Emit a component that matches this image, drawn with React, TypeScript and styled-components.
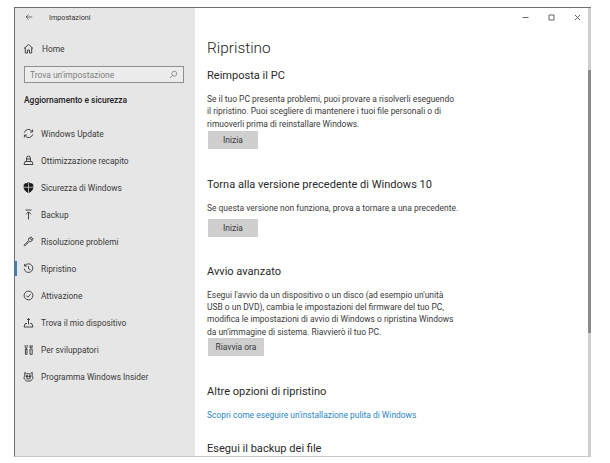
import React from "react";
import styled, { createGlobalStyle } from "styled-components";

const Global = createGlobalStyle`
  html, body { margin: 0; padding: 0; background: #fff; }
  body { width: 610px; height: 463px; overflow: hidden; font-family: Roboto, "Open Sans", sans-serif; color: #222; }
  * { box-sizing: border-box; }
`;

const Page = styled.div`
  width: 610px;
  height: 463px;
  padding: 7px 19px 6px 14px;
`;
const Win = styled.div`
  display: flex;
  width: 577px;
  height: 450px;
  border-top: 1px solid #6f6f6f;
  border-left: 1px solid #6f6f6f;
  border-bottom: 1px solid #c8c8c8;
`;
const Sidebar = styled.aside`
  width: 180px;
  flex: none;
  background: #e6e6e6;
  display: flex;
  flex-direction: column;
`;
const TitleRow = styled.div`
  height: 18px;
  display: flex;
  align-items: center;
  padding-left: 10px;
  gap: 16px;
  font-size: 7.2px;
  color: #333;
`;
const HomeRow = styled.div`
  height: 27px;
  margin-top: 9px;
  display: flex;
  align-items: center;
  gap: 8px;
  padding-left: 8px;
  font-size: 8.4px;
  color: #3a3a3a;
`;
const Search = styled.div`
  margin: 4px 0 0 9px;
  width: 160px;
  height: 17px;
  border: 1px solid #8f8f8f;
  background: #ececec;
  display: flex;
  align-items: center;
  justify-content: space-between;
  padding: 0 5px 0 5px;
  font-size: 8.45px;
  color: #808080;
`;
const SectionTitle = styled.div`
  margin: 10px 0 0 9px;
  height: 14px;
  line-height: 14px;
  font-size: 8.45px;
  font-weight: 500;
  color: #222;
`;
const Nav = styled.nav`
  margin-top: 13px;
  display: flex;
  flex-direction: column;
`;
const NavItem = styled.div<{ $active?: boolean }>`
  position: relative;
  height: 27px;
  display: flex;
  align-items: center;
  gap: 7px;
  padding-left: 8px;
  font-size: 8.35px;
  color: #3a3a3a;
  &::before {
    content: "";
    display: ${(p) => (p.$active ? "block" : "none")};
    position: absolute;
    left: 0;
    top: 6px;
    width: 2px;
    height: 15px;
    background: #3c7fc0;
  }
`;
const Main = styled.main`
  flex: 1;
  position: relative;
  background: #fff;
  padding: 31px 0 0 12px;
  overflow: hidden;
`;
const Controls = styled.div`
  position: absolute;
  top: 4px;
  right: 0;
  display: flex;
  align-items: center;
  gap: 19px;
  padding-right: 7px;
  height: 10px;
`;
const H1 = styled.h1`
  margin: 0;
  font-weight: 300;
  font-size: 15.4px;
  line-height: 18px;
  color: #222;
`;
const H2 = styled.h2<{ $mt: number }>`
  margin: ${(p) => p.$mt}px 0 0;
  font-weight: 400;
  font-size: 11.05px;
  line-height: 16px;
  color: #2a2a2a;
`;
const P = styled.p`
  margin: 9px 0 0;
  font-size: 8.45px;
  line-height: 12.4px;
  color: #3a3a3a;
`;
const Btn = styled.div<{ $w: number; $mt: number }>`
  margin-top: ${(p) => p.$mt}px;
  margin-left: 1px;
  width: ${(p) => p.$w}px;
  height: 18px;
  background: #cfcfcf;
  display: flex;
  align-items: center;
  justify-content: center;
  font-size: 8.45px;
  color: #3a3a3a;
`;
const LinkText = styled.a`
  display: block;
  margin-top: 9px;
  font-size: 8.45px;
  line-height: 12px;
  color: #2a86c2;
`;
const Track = styled.div`
  width: 3px;
  flex: none;
  background: #cfcfcf;
`;
const Thumb = styled.div`
  margin-top: 62px;
  height: 263px;
  background: #8a8a8a;
`;

const Ic = styled.svg<{ $size?: number; $stroke?: string }>`
  width: ${(p) => p.$size ?? 11}px;
  height: ${(p) => p.$size ?? 11}px;
  flex: none;
  fill: none;
  stroke: ${(p) => p.$stroke ?? "#333"};
  stroke-width: 0.9;
`;

const icons: Record<string, React.ReactNode> = {
  update: <><path d="M1.3 4.6a4.2 4.2 0 0 1 7.4-1.6l.8.9" /><path d="M9.6 1.6V4H7.2" /><path d="M9.7 6.4a4.2 4.2 0 0 1-7.4 1.6l-.8-.9" /><path d="M1.4 9.4V7h2.4" /></>,
  delivery: <><path d="M3.6 6V3a1.9 1.9 0 0 1 3.8 0v3" /><path d="M3.6 4h3.8" /><path d="M2 6.5h7l1 3H1z" /></>,
  shield: <><path d="M5.5.8 9.8 2.3V6c0 2.2-2.2 3.7-4.3 4.7C3.4 9.7 1.2 8.2 1.2 6V2.3z" fill="#1c1c1c" stroke="#1c1c1c" /><path d="M5.5.8v10M1.2 5.3h8.6" stroke="#e6e6e6" strokeWidth=".7" /></>,
  backup: <><path d="M2.5 1h6" /><path d="M5.5 10.5V3" /><path d="M3 5.3l2.5-2.5L8 5.3" /></>,
  wrench: <path d="M1.2 9 5.6 4.6a2.6 2.6 0 0 1 3.2-3.3L7.3 2.8l.9.9 1.5-1.5a2.6 2.6 0 0 1-3.3 3.2L2 9.8a.6.6 0 0 1-.8-.8z" />,
  restore: <><path d="M2 2.6a4.3 4.3 0 1 1-.8 3" /><path d="M1.6 .9v2.2h2.2" /><path d="M5.5 3v2.8l2 1" /></>,
  check: <><circle cx="5.5" cy="5.5" r="4.4" /><path d="M3.4 5.6l1.5 1.5 2.7-2.9" /></>,
  find: <><path d="M1 10h9L8.8 6.6H7" /><path d="M4 6.6H2.2L1 10" /><path d="M5.5 7.5V1.5" /><path d="M4 3l1.5-1.5L7 3" /></>,
  dev: <><path d="M2.2 1v1.8c0 .8.5 1.4 1 1.4s1-.6 1-1.4V1" /><path d="M3.2 4.2v1" /><path d="M7 5h2.2v5.3H7z" /><path d="M7.2 3.2V1M9 3.2V1M6.6 3.4h3" /><path d="M2.4 5h1.6v5.3H2.4z" /></>,
  insider: <><path d="M1.8 1.3 3.5 2.8h4l1.7-1.5V5c1 .6 1 3 0 3.5L7.6 10H3.4L1.8 8.5C.8 8 .8 5.6 1.8 5z" /><circle cx="4" cy="5.4" r=".9" fill="#333" /><circle cx="7" cy="5.4" r=".9" fill="#333" /><path d="M3.4 7.8h4.2" /></>,
};

const items: [string, string][] = [
  ["update", "Windows Update"],
  ["delivery", "Ottimizzazione recapito"],
  ["shield", "Sicurezza di Windows"],
  ["backup", "Backup"],
  ["wrench", "Risoluzione problemi"],
  ["restore", "Ripristino"],
  ["check", "Attivazione"],
  ["find", "Trova il mio dispositivo"],
  ["dev", "Per sviluppatori"],
  ["insider", "Programma Windows Insider"],
];

export default function App() {
  return (
    <Page>
      <Global />
      <Win>
        <Sidebar>
          <TitleRow>
            <Ic viewBox="0 0 11 11" $size={8}><path d="M10 5.5H1.5M5 2 1.5 5.5 5 9" /></Ic>
            <span>Impostazioni</span>
          </TitleRow>
          <HomeRow>
            <Ic viewBox="0 0 11 11"><path d="M1 5.5 5.5 1.5 10 5.5M2.3 4.5V10h2.2V7h2v3h2.2V4.5" /></Ic>
            <span>Home</span>
          </HomeRow>
          <Search>
            <span>Trova un'impostazione</span>
            <Ic viewBox="0 0 11 11" $size={9} $stroke="#777"><circle cx="6.5" cy="4.5" r="3" /><path d="M4.3 6.7 1.2 9.8" /></Ic>
          </Search>
          <SectionTitle>Aggiornamento e sicurezza</SectionTitle>
          <Nav>
            {items.map(([k, label]) => (
              <NavItem key={k} $active={k === "restore"}>
                <Ic viewBox="0 0 11 11">{icons[k]}</Ic>
                <span>{label}</span>
              </NavItem>
            ))}
          </Nav>
        </Sidebar>
        <Main>
          <Controls>
            <Ic viewBox="0 0 7 7" $size={7} $stroke="#555"><path d="M.5 3.5h6" /></Ic>
            <Ic viewBox="0 0 7 7" $size={7} $stroke="#555"><path d="M1 1h5v5H1z" /></Ic>
            <Ic viewBox="0 0 7 7" $size={7} $stroke="#555"><path d="M1 1l5 5M6 1l-5 5" /></Ic>
          </Controls>
          <H1>Ripristino</H1>
          <H2 $mt={11}>Reimposta il PC</H2>
          <P>
            Se il tuo PC presenta problemi, puoi provare a risolverli eseguendo<br />
            il ripristino. Puoi scegliere di mantenere i tuoi file personali o di<br />
            rimuoverli prima di reinstallare Windows.
          </P>
          <Btn $w={50} $mt={1}>Inizia</Btn>
          <H2 $mt={28}>Torna alla versione precedente di Windows 10</H2>
          <P>Se questa versione non funziona, prova a tornare a una precedente.</P>
          <Btn $w={50} $mt={4}>Inizia</Btn>
          <H2 $mt={27}>Avvio avanzato</H2>
          <P>
            Esegui l'avvio da un dispositivo o un disco (ad esempio un'unità<br />
            USB o un DVD), cambia le impostazioni del firmware del tuo PC,<br />
            modifica le impostazioni di avvio di Windows o ripristina Windows<br />
            da un'immagine di sistema. Riavvierò il tuo PC.
          </P>
          <Btn $w={56} $mt={0}>Riavvia ora</Btn>
          <H2 $mt={28}>Altre opzioni di ripristino</H2>
          <LinkText>Scopri come eseguire un'installazione pulita di Windows</LinkText>
          <H2 $mt={20}>Esegui il backup dei file</H2>
        </Main>
        <Track><Thumb /></Track>
      </Win>
    </Page>
  );
}
